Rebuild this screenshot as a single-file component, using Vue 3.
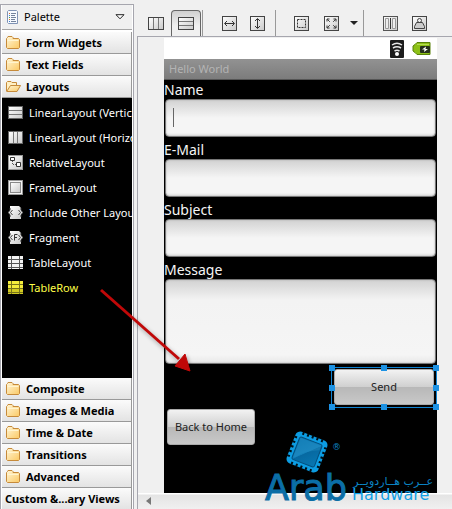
<script setup>
import { ref } from 'vue'

const topSections = [
  { name: 'Form Widgets', open: false },
  { name: 'Text Fields', open: false },
  { name: 'Layouts', open: true },
]
const bottomSections = ['Composite', 'Images & Media', 'Time & Date', 'Transitions', 'Advanced']
const items = [
  { name: 'LinearLayout (Vertical)', icon: 'vertical' },
  { name: 'LinearLayout (Horizontal)', icon: 'horizontal' },
  { name: 'RelativeLayout', icon: 'relative' },
  { name: 'FrameLayout', icon: 'frame' },
  { name: 'Include Other Layout', icon: 'include' },
  { name: 'Fragment', icon: 'fragment' },
  { name: 'TableLayout', icon: 'table' },
  { name: 'TableRow', icon: 'row' },
]
const selected = ref('TableRow')
const fields = [
  { id: 'name', label: 'Name' },
  { id: 'email', label: 'E-Mail' },
  { id: 'subject', label: 'Subject' },
]
const handles = ['nw', 'n', 'ne', 'w', 'e', 'sw', 's', 'se']
</script>

<template>
  <div class="editor">
    <svg class="defs" width="0" height="0" aria-hidden="true">
      <defs>
        <linearGradient id="folderFill" x1="0" y1="0" x2="1" y2="1">
          <stop offset="0" stop-color="#fff6d8" />
          <stop offset="1" stop-color="#fbc963" />
        </linearGradient>
        <linearGradient id="tileFill" x1="0" y1="0" x2="1" y2="1">
          <stop offset="0" stop-color="#ffffff" />
          <stop offset="1" stop-color="#c9c9c9" />
        </linearGradient>
      </defs>
    </svg>

    <aside class="palette">
      <header class="palette-head">
        <svg width="13" height="16" viewBox="0 0 13 16">
          <path d="M1.5 2.5L2.5 1.5H10.500L11.500 2.500V14.500H2.500L1.500 13.500Z" fill="#f7faff" stroke="#7f93b5" />
          <path d="M5 4.500H10M5 6.500H9M5 8.500H10M5 10.500H9M5 12.500H10" stroke="#74839c" />
          <path d="M3 4.500H4M3 10.500H4" stroke="#e0702c" />
          <path d="M3 6.500H4M3 12.500H4" stroke="#3a7fd0" />
          <path d="M3 8.500H4" stroke="#4d9a45" />
        </svg>
        <span>Palette</span>
        <button class="menu-arrow" aria-label="Palette menu">
          <svg width="10" height="6" viewBox="0 0 10 6"><path d="M1 .7H9L5 4.800Z" fill="#fff" stroke="#222" /></svg>
        </button>
      </header>

      <button v-for="s in topSections" :key="s.name" class="section">
        <svg v-if="!s.open" width="15" height="13" viewBox="0 0 15 13">
          <path d="M.5 2.500L1.500 1.500L2 .5H6L7 1.500V2.500H12.500L13.500 3.500V11.500L12.500 12.500H1.500L.5 11.500Z" fill="url(#folderFill)" stroke="#c68a3a" />
          <path d="M1.500 4.500H12.500" stroke="#fff4cf" />
        </svg>
        <svg v-else width="15" height="13" viewBox="0 0 15 13">
          <path d="M.5 11V2.500L1.500 1.500H5L6 2.500H10.500V5.500" fill="#fff0c4" stroke="#c68a3a" />
          <path d="M.7 11.500L4.500 5.500H14.500L11 11.500Z" fill="url(#folderFill)" stroke="#c68a3a" />
        </svg>
        <span>{{ s.name }}</span>
      </button>

      <div class="items">
        <button
          v-for="it in items"
          :key="it.name"
          class="item"
          :class="{ active: it.name === selected }"
          @click="selected = it.name"
        >
          <svg width="15" height="15" viewBox="0 0 15 15">
            <g v-if="it.icon === 'vertical'">
              <rect x=".5" y="1.500" width="14" height="12" fill="url(#tileFill)" stroke="#666" />
              <path d="M1 5.500H14M1 9.500H14" stroke="#777" />
            </g>
            <g v-else-if="it.icon === 'horizontal'">
              <rect x=".5" y="1.500" width="14" height="12" fill="url(#tileFill)" stroke="#666" />
              <path d="M5.500 2V13M9.500 2V13" stroke="#777" />
            </g>
            <g v-else-if="it.icon === 'relative'">
              <rect x=".5" y=".5" width="14" height="14" fill="url(#tileFill)" stroke="#999" />
              <path d="M2.500 2.500H6.500V5.500H2.500ZM8.500 7.500H12.500V11.500H8.500Z" fill="#fff" stroke="#333" />
              <path d="M4.500 6V9.500H8" fill="none" stroke="#555" stroke-dasharray="1 1" />
            </g>
            <g v-else-if="it.icon === 'frame'">
              <rect x=".5" y=".5" width="14" height="14" fill="#f4f4f4" stroke="#999" />
              <rect x="2.500" y="2.500" width="10" height="10" fill="url(#tileFill)" stroke="#888" />
            </g>
            <g v-else-if="it.icon === 'include' || it.icon === 'fragment'">
              <path d="M2 1H11L13 3V14H2Z" fill="url(#tileFill)" />
              <path d="M0 7.500L3.500 4V11ZM15 7.500L11.500 4V11Z" fill="#e4e4e4" />
              <path d="M2 3V5L0 7.500L2 10V12M13 3V5L15 7.500L13 10V12" fill="none" stroke="#333" />
              <path d="M4.500 5L2.500 7.500L4.500 10M10.500 5L12.500 7.500L10.500 10" fill="none" stroke="#444" />
              <path v-if="it.icon === 'fragment'" d="M6.500 10.500V4.500H9.500M6.500 7.500H9" fill="none" stroke="#333" />
            </g>
            <g v-else>
              <rect x="0" y="1" width="15" height="13" :fill="it.icon === 'row' ? '#f4ee3c' : '#f3f3f3'" />
              <rect v-if="it.icon === 'row'" x="0" y="9" width="15" height="5" fill="#d2cb22" />
              <path d="M0 4.500H15M0 8.500H15M0 12.500H15M3.500 1V14M11.500 1V14" :stroke="it.icon === 'row' ? '#77731a' : '#555'" />
            </g>
          </svg>
          <span>{{ it.name }}</span>
        </button>
      </div>

      <button v-for="s in bottomSections" :key="s" class="section">
        <svg width="15" height="13" viewBox="0 0 15 13">
          <path d="M.5 2.500L1.500 1.500L2 .5H6L7 1.500V2.500H12.500L13.500 3.500V11.500L12.500 12.500H1.500L.5 11.500Z" fill="url(#folderFill)" stroke="#c68a3a" />
          <path d="M1.500 4.500H12.500" stroke="#fff4cf" />
        </svg>
        <span>{{ s }}</span>
      </button>
      <button class="section last"><span>Custom &amp;...ary Views</span></button>
    </aside>

    <main class="workspace">
      <div class="toolbar">
        <div class="group first">
          <button class="tool" aria-label="Horizontal">
            <svg width="16" height="15" viewBox="0 0 16 15">
              <rect x=".5" y="1.500" width="15" height="12" fill="url(#tileFill)" stroke="#444" />
              <path d="M5.500 2V13M10.500 2V13" stroke="#777" />
            </svg>
          </button>
          <button class="tool pressed" aria-label="Vertical">
            <svg width="16" height="15" viewBox="0 0 16 15">
              <rect x=".5" y="1.500" width="15" height="12" fill="url(#tileFill)" stroke="#444" />
              <path d="M1 5.500H15M1 9.500H15" stroke="#777" />
            </svg>
          </button>
        </div>
        <div class="group second">
          <button class="tool" aria-label="Match width">
            <svg width="15" height="15" viewBox="0 0 15 15">
              <rect x=".5" y=".5" width="14" height="14" fill="url(#tileFill)" stroke="#444" />
              <path d="M3 7.500H12M5 5L2.500 7.500L5 10M10 5L12.500 7.500L10 10" fill="none" stroke="#333" />
            </svg>
          </button>
          <button class="tool" aria-label="Match height">
            <svg width="15" height="15" viewBox="0 0 15 15">
              <rect x=".5" y=".5" width="14" height="14" fill="url(#tileFill)" stroke="#444" />
              <path d="M7.500 3V12M5 5L7.500 2.500L10 5M5 10L7.500 12.500L10 10" fill="none" stroke="#333" />
            </svg>
          </button>
        </div>
        <div class="group third">
          <button class="tool" aria-label="Margins">
            <svg width="15" height="15" viewBox="0 0 15 15">
              <rect x=".5" y=".5" width="14" height="14" fill="url(#tileFill)" stroke="#444" />
              <rect x="3.500" y="3.500" width="8" height="8" fill="none" stroke="#333" stroke-dasharray="2 1" />
            </svg>
          </button>
          <button class="tool" aria-label="Gravity">
            <svg width="15" height="15" viewBox="0 0 15 15">
              <rect x=".5" y=".5" width="14" height="14" fill="url(#tileFill)" stroke="#444" />
              <path d="M3 5.500V3H5.500M9.500 3H12V5.500M12 9.500V12H9.500M5.500 12H3V9.500" fill="none" stroke="#333" />
              <path d="M3 3L12 12M12 3L3 12" stroke="#444" stroke-dasharray="4 4.700" />
            </svg>
          </button>
          <button class="drop" aria-label="Gravity options">
            <svg width="8" height="4" viewBox="0 0 8 4"><path d="M0 0H8L4 4Z" fill="#222" /></svg>
          </button>
        </div>
        <div class="group fourth">
          <button class="tool" aria-label="Distribute weights">
            <svg width="15" height="15" viewBox="0 0 15 15">
              <rect x=".5" y=".5" width="14" height="14" fill="url(#tileFill)" stroke="#555" />
              <path d="M2.500 2.500H5.500V12.500H2.500ZM9.500 2.500H12.500V12.500H9.500Z" fill="#eee" stroke="#999" />
              <path d="M7.500 2V13" stroke="#333" />
            </svg>
          </button>
          <button class="tool" aria-label="Assign weight">
            <svg width="15" height="15" viewBox="0 0 15 15">
              <rect x=".5" y=".5" width="14" height="14" fill="url(#tileFill)" stroke="#444" />
              <circle cx="7.500" cy="4.500" r="2" fill="#eee" stroke="#444" />
              <path d="M4.500 6.500H10.500L12.500 10.500V12.500H2.500V10.500Z" fill="#ccc" stroke="#444" />
            </svg>
          </button>
        </div>
      </div>

      <div class="canvas">
        <section class="phone">
          <div class="status">
            <svg width="14" height="18" viewBox="0 0 14 18">
              <rect width="14" height="18" rx="1" fill="#1c1c1c" />
              <path d="M2 5Q7 1.500 12 5M3 8Q7 5.500 11 8M4.500 11Q7 9.500 9.500 11" fill="none" stroke="#e8e8e8" stroke-width="1.500" />
              <circle cx="7" cy="14" r="2" fill="#fff" />
            </svg>
            <svg width="19" height="13" viewBox="0 0 19 13">
              <path d="M5 .5H18V12.500H5L3 10.500L1 9V4L3 2.500Z" fill="#8cc016" stroke="#588009" />
              <path d="M5 2.500H17" stroke="#b6dc55" />
              <rect x="8" y="4" width="10" height="7" rx="1" fill="#26301c" />
              <path d="M14 4.500L10 7.500H12.500L12 10L16 7H13.500Z" fill="#fff" />
            </svg>
          </div>
          <div class="title">Hello World</div>
          <form @submit.prevent>
            <div v-for="f in fields" :key="f.id" class="field">
              <label :for="f.id">{{ f.label }}</label>
              <input :id="f.id" type="text" />
              <i v-if="f.id === 'name'" class="caret"></i>
            </div>
            <div class="field">
              <label for="message">Message</label>
              <textarea id="message"></textarea>
            </div>
            <div class="send-row">
              <div class="selection">
                <button class="android">Send</button>
                <i v-for="h in handles" :key="h" class="handle" :class="h"></i>
              </div>
            </div>
            <button type="button" class="android back">Back to Home</button>
          </form>
        </section>
      </div>

      <div class="scroll">
        <button aria-label="Scroll left">
          <svg width="5" height="8" viewBox="0 0 5 8"><path d="M5 0V8L0 4Z" fill="#777" /></svg>
        </button>
      </div>

      <svg class="brand" width="172" height="76" viewBox="0 0 172 76" role="img" aria-label="Arab Hardware">
        <defs>
          <linearGradient id="chipFill" x1="0" y1="0" x2="1" y2="1">
            <stop offset="0" stop-color="#0873ae" />
            <stop offset=".5" stop-color="#137fb9" />
            <stop offset=".52" stop-color="#0769a1" />
            <stop offset="1" stop-color="#0878b3" />
          </linearGradient>
        </defs>
        <g transform="translate(44 22) rotate(21)">
          <rect x="-17" y="-17" width="34" height="34" rx="5" fill="#0c9ce2" />
          <path d="M-11 -16H12M-11 16H12M-16 -11V12M16 -11V12" stroke="#001018" stroke-width="3" stroke-dasharray="2 3" />
          <rect x="-12" y="-12" width="24" height="24" rx="2" fill="url(#chipFill)" stroke="#044e7c" />
          <path d="M-9 9Q-3 0 11 -6V-11H-11V9Z" fill="#2b94c8" opacity=".35" />
        </g>
        <text x="69" y="20" class="reg">®</text>
        <text x="2" y="70" class="arab">Arab</text>
        <text x="170" y="55" class="arabic">عــرب هــاردويــر</text>
        <text x="89" y="70" class="hardware">Hardware</text>
      </svg>
    </main>

    <svg class="arrow" width="100" height="90" viewBox="0 0 100 90" aria-hidden="true">
      <path d="M5 5L83 74" stroke="#c00808" stroke-width="3" />
      <path d="M94 86L79 81L89 69Z" fill="#c00808" stroke="#c00808" />
    </svg>
  </div>
</template>

<style>
body {
  background: #f0f0f0;
}
</style>

<style scoped>
* {
  box-sizing: border-box;
}
.editor {
  position: relative;
  display: flex;
  min-height: 100vh;
  gap: 3px;
  background: #f0f0f0;
  color: #000;
  font: 11px/16px 'Noto Sans', 'Open Sans', sans-serif;
  overflow: hidden;
}
.defs {
  position: absolute;
}
button {
  margin: 0;
  padding: 0;
  border: 0;
  background: none;
  color: inherit;
  font: inherit;
}
svg {
  display: block;
  flex: none;
}
.palette {
  display: flex;
  flex-direction: column;
  flex: none;
  width: 134px;
  margin-top: 4px;
  border: solid #a6a6ae;
  border-width: 1px 1px 0;
  background: #fff;
  padding: 0 1px;
}
.palette-head {
  display: flex;
  align-items: center;
  gap: 5px;
  height: 25px;
  margin-bottom: 2px;
  padding: 0 7px 0 4px;
  background: #f0f0f0;
  border-bottom: 1px solid #a6a6a6;
}
.menu-arrow {
  margin-left: auto;
}
.section {
  display: flex;
  align-items: center;
  gap: 5px;
  flex: none;
  height: 22px;
  padding: 0 4px;
  border: solid #999;
  border-width: 0 1px 1px 0;
  background: linear-gradient(#fbfbfb, #e3e3e3);
  font-weight: 700;
  white-space: nowrap;
}
.last {
  height: 21px;
  padding: 0 3px;
  border-bottom: 0;
}
.items {
  flex: 1;
  padding-top: 2px;
  background: #000;
  color: #fff;
  overflow: hidden;
}
.item {
  display: flex;
  align-items: center;
  gap: 6px;
  width: 100%;
  height: 25px;
  padding-left: 6px;
  white-space: nowrap;
}
.active {
  color: #ffff48;
}
.workspace {
  position: relative;
  flex: 1;
  min-width: 0;
  display: flex;
  flex-direction: column;
}
.toolbar {
  display: flex;
  align-items: flex-end;
  height: 37px;
  border-bottom: 1px solid #a6a6ae;
}
.group {
  display: flex;
  align-items: center;
  height: 26px;
  border-right: 1px solid #999;
}
.first {
  padding: 0 1px 0 4px;
}
.second {
  padding: 0 4px 0 12px;
}
.third {
  padding: 0 4px 0 10px;
}
.fourth {
  padding-left: 12px;
  border-right: 0;
}
.second .tool,
.fourth .tool {
  width: 28px;
}
.fourth .tool + .tool {
  width: 30px;
}
.tool {
  display: flex;
  align-items: center;
  justify-content: center;
  width: 30px;
  height: 26px;
}
.pressed {
  border: 1px solid #666;
  border-bottom: 0;
  border-radius: 4px 4px 0 0;
  background: linear-gradient(#d0d0d0, #f0f0f0 60%);
}
.drop {
  padding: 0 1px 0 4px;
}
.canvas {
  flex: 1;
  display: flex;
  border-left: 1px solid #a6a6ae;
  padding: 1px 15px 0 26px;
}
.phone {
  flex: 1;
  min-width: 0;
  background: #000;
  color: #f5f5f5;
}
.status {
  display: flex;
  align-items: center;
  justify-content: flex-end;
  gap: 8px;
  height: 21px;
  padding-right: 6px;
  background: #fff;
}
.title {
  height: 21px;
  padding: 0 5px;
  border-bottom: 1px solid #555;
  background: linear-gradient(#929292, #7c7c7c);
  color: #b4b4b4;
  line-height: 20px;
}
.field {
  position: relative;
  display: flex;
  flex-direction: column;
  padding-bottom: 3px;
}
label {
  height: 19px;
  font-size: 14px;
  line-height: 19px;
}
input,
textarea {
  display: block;
  height: 38px;
  margin: 0 1px;
  padding: 4px 8px;
  border: 1px solid #777;
  border-radius: 4px;
  background: linear-gradient(#d2d2d2, #f5f5f5 50%, #f5f5f5 90%, #e4e4e4);
  box-shadow: inset 0 0 2px #aaa;
  font: inherit;
  resize: none;
  outline: 0;
}
textarea {
  height: 85px;
  background: linear-gradient(#d2d2d2, #f3f3f3 24%, #f5f5f5 90%, #e8e8e8);
}
.caret {
  position: absolute;
  left: 9px;
  top: 28px;
  width: 1px;
  height: 19px;
  background: #666;
}
.send-row {
  display: flex;
  justify-content: flex-end;
}
.selection {
  position: relative;
  width: 106px;
  height: 41px;
  padding: 1px 2px;
  border: 1px solid #0f82d0;
}
.android {
  display: block;
  width: 100%;
  height: 36px;
  border: 1px solid #aaa;
  border-radius: 3px;
  background: linear-gradient(#f2f2f2, #d0d0d0 49%, #b8b8b8 51%, #c8c8c8);
  color: #222;
}
.back {
  width: 88px;
  margin: 1px 3px;
}
.handle {
  position: absolute;
  width: 6px;
  height: 6px;
  margin: -3px;
  background: #1c92e4;
}
.nw,
.w,
.sw {
  left: 0;
}
.n,
.s {
  left: 50%;
}
.ne,
.e,
.se {
  left: 100%;
}
.nw,
.n,
.ne {
  top: 0;
}
.w,
.e {
  top: 50%;
}
.sw,
.s,
.se {
  top: 100%;
}
.scroll {
  display: flex;
  align-items: center;
  height: 16px;
  padding-left: 8px;
  border-left: 1px solid #a6a6ae;
  background: linear-gradient(#fff 1px, #e4e4e4 2px, #f0f0f0);
}
.brand {
  position: absolute;
  right: 17px;
  bottom: 3px;
}
.brand text {
  font-family: 'DejaVu Sans', sans-serif;
}
.brand .reg {
  fill: #0c84c4;
  font-size: 9px;
}
.brand .arab {
  fill: #0b6ea6;
  stroke: #0b6ea6;
  stroke-width: 1px;
  font-size: 35px;
}
.brand .hardware {
  fill: #12a0e6;
  font-size: 16px;
}
.brand .arabic {
  fill: #0b84c4;
  font-size: 11px;
  direction: rtl;
}
.arrow {
  position: absolute;
  left: 96px;
  top: 285px;
  filter: drop-shadow(1px 2px 2px rgba(0, 0, 0, 0.35));
  pointer-events: none;
}
</style>
